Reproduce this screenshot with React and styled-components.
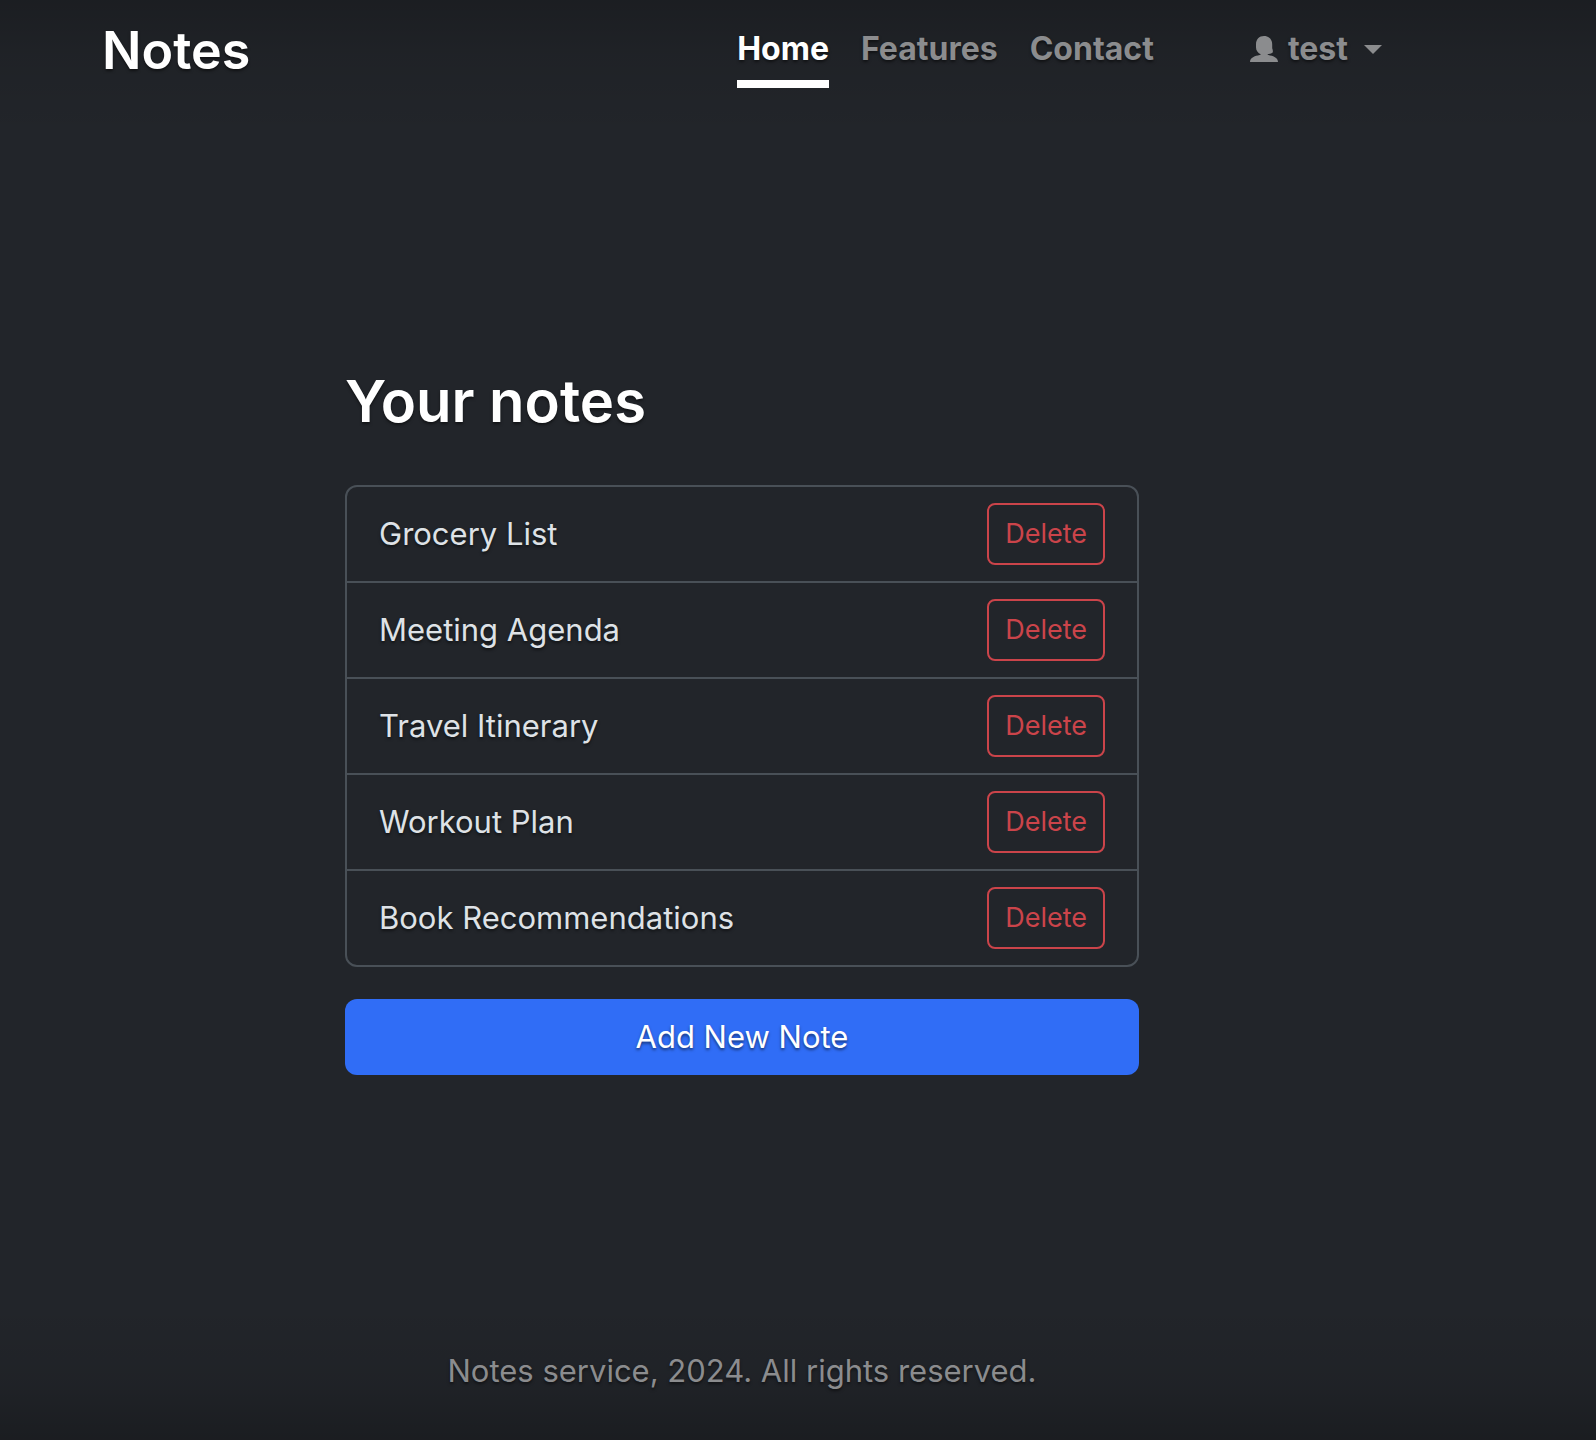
import React from "react";
import styled, { createGlobalStyle } from "styled-components";

const GlobalStyle = createGlobalStyle`
  *, *::before, *::after { box-sizing: border-box; }
  body {
    margin: 0;
    background: #212529;
    color: #fff;
    font-family: Inter, "Liberation Sans", sans-serif;
    font-size: 31px;
    line-height: 48px;
    text-shadow: 0 2px 3px rgba(0, 0, 0, 0.5);
  }
`;

const Page = styled.div`
  min-height: 100vh;
  display: flex;
  padding-right: 112px;
  background:
    linear-gradient(to bottom, rgba(0, 0, 0, 0.2), rgba(0, 0, 0, 0.08) 56px, rgba(0, 0, 0, 0) 136px),
    linear-gradient(to top, rgba(0, 0, 0, 0.22), rgba(0, 0, 0, 0.08) 56px, rgba(0, 0, 0, 0) 136px),
    #22252a;
`;

const Cover = styled.div`
  width: 100%;
  max-width: 1344px;
  margin: 0 auto;
  padding: 16px 32px 45px;
  display: flex;
  flex-direction: column;
`;

const Header = styled.header`
  display: flex;
  justify-content: space-between;
  align-items: flex-start;
`;

const Brand = styled.h3`
  margin: 0;
  font-size: 52px;
  font-weight: 600;
  line-height: 70px;
`;

const Nav = styled.nav`
  display: flex;
  gap: 32px;
  padding-top: 8px;
  font-size: 32px;
  line-height: 50px;
`;

const NavLink = styled.a`
  padding-bottom: 6px;
  border-bottom: 8px solid ${(p) => (p.$active ? "#fff" : "transparent")};
  color: ${(p) => (p.$active ? "#fff" : "#8b8c8e")};
  font-weight: 700;
  text-decoration: none;
`;

const UserMenu = styled.button`
  display: flex;
  align-items: center;
  height: 50px;
  margin: 0 0 0 64px;
  padding: 0;
  border: 0;
  background: none;
  color: #8b8c8e;
  font: inherit;
  font-weight: 700;
  text-shadow: inherit;
  gap: 10px;
`;

const Caret = styled.span`
  margin-left: 6px;
  border: 9px solid transparent;
  border-top-color: currentColor;
  border-bottom: 0;
`;

const Main = styled.main`
  width: 100%;
  max-width: 794px;
  margin: auto;
`;

const Title = styled.h1`
  margin: 0 0 44px;
  font-size: 58px;
  font-weight: 600;
  line-height: 80px;
`;

const List = styled.ul`
  margin: 0 0 32px;
  padding: 0;
  list-style: none;
  border: 2px solid #495057;
  border-radius: 12px;
`;

const Item = styled.li`
  display: flex;
  align-items: center;
  justify-content: space-between;
  padding: 16px 32px;
  color: #dee2e6;

  & + & { border-top: 2px solid #495057; }
`;

const DeleteButton = styled.button`
  height: 62px;
  padding: 0 16px;
  border: 2px solid #cb444a;
  border-radius: 8px;
  background: none;
  color: #cb444a;
  font: inherit;
  font-size: 27px;
`;

const AddButton = styled.button`
  width: 100%;
  height: 76px;
  border: 0;
  border-radius: 12px;
  background: #306df6;
  color: #fff;
  font: inherit;
  text-shadow: inherit;
`;

const Footer = styled.footer`
  text-align: center;
  color: #8b8c8e;
`;

const notes = ["Grocery List", "Meeting Agenda", "Travel Itinerary", "Workout Plan", "Book Recommendations"];

function UserIcon() {
  return (
    <svg width="28" height="26" viewBox="0 0 28 26" fill="currentColor" aria-hidden="true">
      <path d="M14 0C9.200 0 6 3.400 6 8.200v3.300c0 3 2 5.700 4.800 6.700-.4.700-1.500 1-3 1.300C3.500 20.300 0 22.300 0 26h28c0-3.700-3.500-5.700-7.800-6.500-1.400-.3-2.300-.6-2.800-1.200 2.500-.5 4.300-1 5.300-1.900.4-1.200.1-2.600-.5-4.200V8.200C22.200 3.400 18.800 0 14 0z" />
    </svg>
  );
}

export default function App() {
  return (
    <>
      <GlobalStyle />
      <Page>
        <Cover>
          <Header>
            <Brand>Notes</Brand>
            <Nav>
              <NavLink href="#home" $active aria-current="page">Home</NavLink>
              <NavLink href="#features">Features</NavLink>
              <NavLink href="#contact">Contact</NavLink>
              <UserMenu type="button" aria-haspopup="menu">
                <UserIcon />
                test
                <Caret />
              </UserMenu>
            </Nav>
          </Header>
          <Main>
            <Title>Your notes</Title>
            <List>
              {notes.map((note) => (
                <Item key={note}>
                  {note}
                  <DeleteButton type="button" aria-label={`Delete ${note}`}>Delete</DeleteButton>
                </Item>
              ))}
            </List>
            <AddButton type="button">Add New Note</AddButton>
          </Main>
          <Footer>Notes service, 2024. All rights reserved.</Footer>
        </Cover>
      </Page>
    </>
  );
}
